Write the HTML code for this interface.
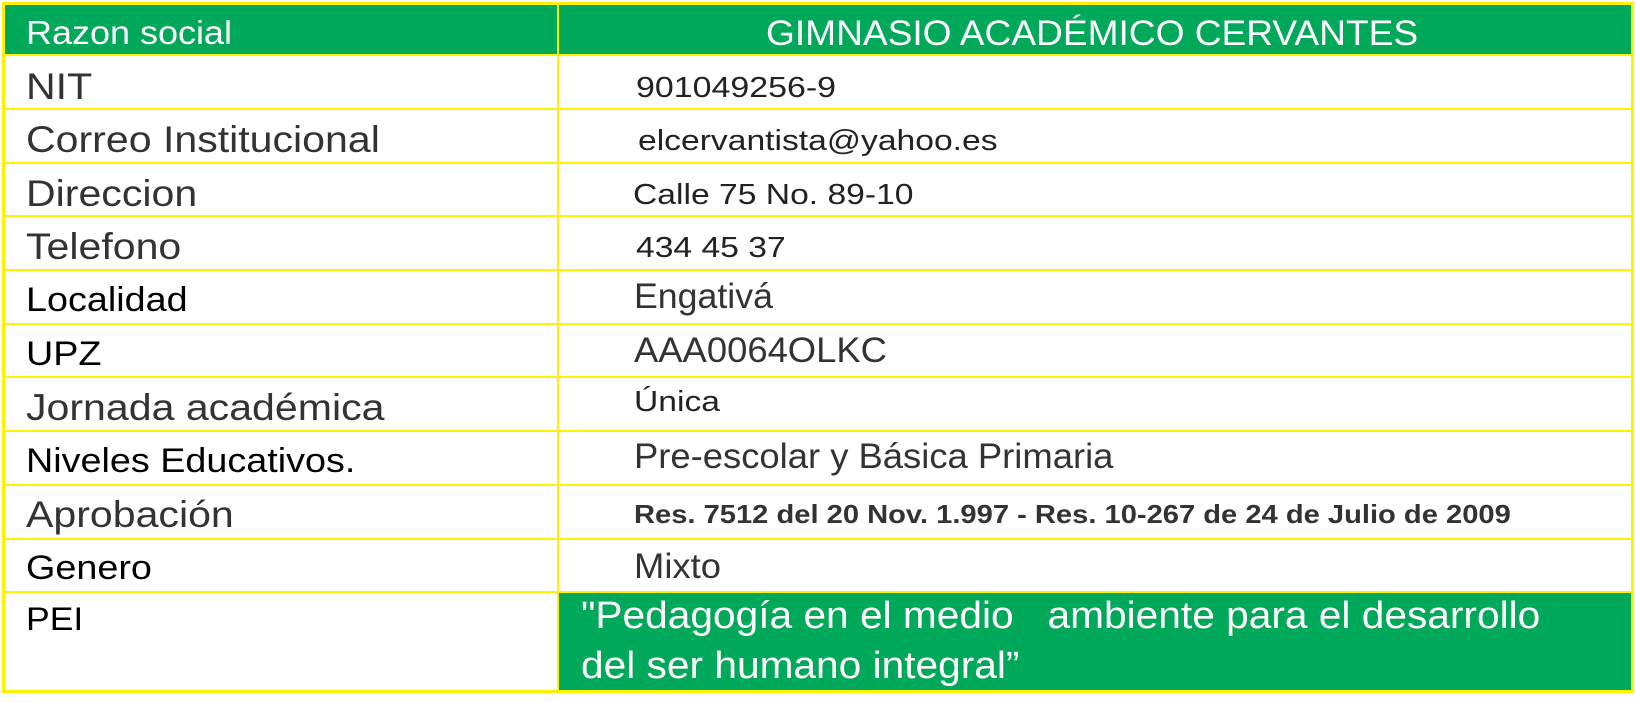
<!DOCTYPE html>
<html><head><meta charset="utf-8"><style>
body{margin:0;width:1636px;height:702px;background:#fff;position:relative;overflow:hidden;font-family:"Liberation Sans",sans-serif}
.b{position:absolute;background:#fff200}
.t{position:absolute;white-space:nowrap;transform-origin:0 50%;line-height:1}
.l{transform:scaleX(1.11)}
.g{position:absolute;background:#00a859}
</style></head><body>
<div class="g" style="left:3px;top:3px;width:1630px;height:52px"></div>
<div class="g" style="left:558px;top:592px;width:1075px;height:100px"></div>
<div class="b" style="left:2px;top:2px;width:1632px;height:3px"></div>
<div class="b" style="left:2px;top:690px;width:1632px;height:3px"></div>
<div class="b" style="left:2px;top:2px;width:3px;height:691px"></div>
<div class="b" style="left:1631px;top:2px;width:3px;height:691px"></div>
<div class="b" style="left:557px;top:4px;width:2px;height:688px"></div>
<div class="b" style="left:3px;top:54px;width:1630px;height:2px"></div>
<div class="b" style="left:3px;top:108px;width:1630px;height:2px"></div>
<div class="b" style="left:3px;top:162px;width:1630px;height:2px"></div>
<div class="b" style="left:3px;top:215px;width:1630px;height:2px"></div>
<div class="b" style="left:3px;top:269px;width:1630px;height:2px"></div>
<div class="b" style="left:3px;top:323px;width:1630px;height:2px"></div>
<div class="b" style="left:3px;top:376px;width:1630px;height:2px"></div>
<div class="b" style="left:3px;top:430px;width:1630px;height:2px"></div>
<div class="b" style="left:3px;top:484px;width:1630px;height:2px"></div>
<div class="b" style="left:3px;top:538px;width:1630px;height:2px"></div>
<div class="b" style="left:3px;top:591px;width:1630px;height:2px"></div>
<div class="t" style="left:26px;top:16px;font-size:33px;color:#fff;transform:scaleX(1.09)">Razon social</div>
<div class="t l" style="left:26px;top:68px;font-size:37px;color:#333">NIT</div>
<div class="t l" style="left:26px;top:121px;font-size:37px;color:#333">Correo Institucional</div>
<div class="t l" style="left:26px;top:175px;font-size:37px;color:#333">Direccion</div>
<div class="t l" style="left:26px;top:228px;font-size:37px;color:#333">Telefono</div>
<div class="t l" style="left:26px;top:283px;font-size:34px;color:#000">Localidad</div>
<div class="t l" style="left:26px;top:337px;font-size:34px;color:#000">UPZ</div>
<div class="t l" style="left:26px;top:389px;font-size:37px;color:#333">Jornada académica</div>
<div class="t l" style="left:26px;top:444px;font-size:34px;color:#000">Niveles Educativos.</div>
<div class="t l" style="left:26px;top:496px;font-size:37px;color:#333">Aprobación</div>
<div class="t l" style="left:26px;top:551px;font-size:34px;color:#000">Genero</div>
<div class="t l" style="left:26px;top:603px;font-size:32px;color:#000">PEI</div>
<div class="t" style="left:766px;top:16px;font-size:35px;color:#fff;transform:scaleX(1.06)">GIMNASIO ACADÉMICO CERVANTES</div>
<div class="t" style="left:636px;top:74px;font-size:29px;color:#222;transform:scaleX(1.17)">901049256-9</div>
<div class="t" style="left:638px;top:127px;font-size:29px;color:#222;transform:scaleX(1.16)">elcervantista@yahoo.es</div>
<div class="t" style="left:633px;top:181px;font-size:29px;color:#222;transform:scaleX(1.16)">Calle 75 No. 89-10</div>
<div class="t" style="left:636px;top:234px;font-size:29px;color:#222;transform:scaleX(1.16)">434 45 37</div>
<div class="t" style="left:634px;top:279px;font-size:35px;color:#333;transform:scaleX(1.02)">Engativá</div>
<div class="t" style="left:634px;top:333px;font-size:35px;color:#333;transform:scaleX(1.04)">AAA0064OLKC</div>
<div class="t" style="left:634px;top:388px;font-size:29px;color:#222;transform:scaleX(1.16)">Única</div>
<div class="t" style="left:634px;top:439px;font-size:35px;color:#333;transform:scaleX(1.04)">Pre-escolar y Básica Primaria</div>
<div class="t" style="left:634px;top:501px;font-size:26px;font-weight:bold;color:#333;transform:scaleX(1.12)">Res. 7512 del 20 Nov. 1.997 - Res. 10-267 de 24 de Julio de 2009</div>
<div class="t" style="left:634px;top:549px;font-size:35px;color:#333;transform:scaleX(1.04)">Mixto</div>
<div class="t" style="left:581px;top:597px;font-size:38px;color:#fff;transform:scaleX(1.07)">"Pedagogía en el medio &nbsp;&nbsp;ambiente para el desarrollo</div>
<div class="t" style="left:581px;top:647px;font-size:38px;color:#fff;transform:scaleX(1.07)">del ser humano integral”</div>
</body></html>
